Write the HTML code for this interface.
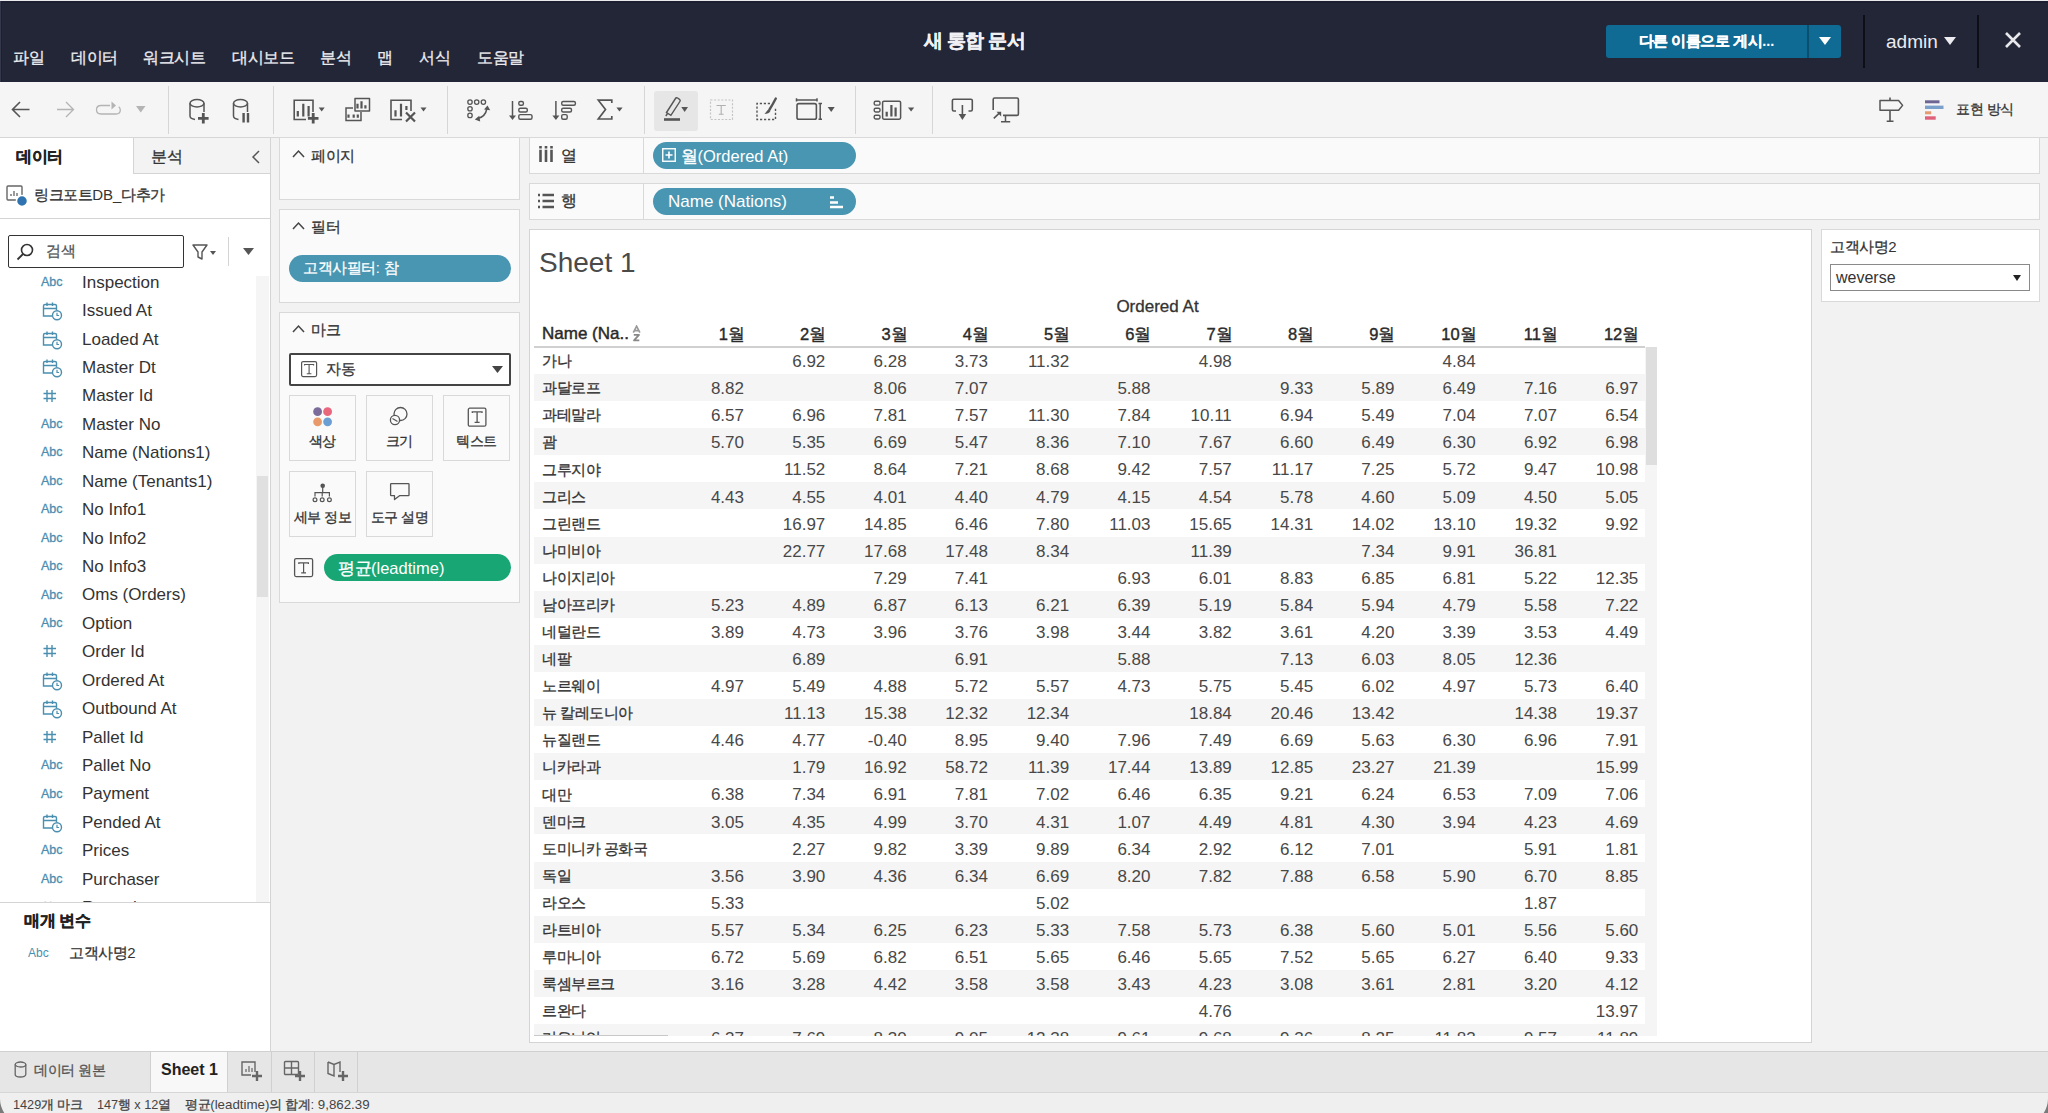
<!DOCTYPE html><html><head><meta charset="utf-8"><style>
html,body{margin:0;padding:0;width:2048px;height:1113px;overflow:hidden;background:#f2f2f2;font-family:"Liberation Sans",sans-serif;}
.b{position:absolute;}
.t{position:absolute;white-space:nowrap;}
.k{letter-spacing:-0.03em;-webkit-text-stroke:0.3px currentColor;}
</style></head><body>
<div class="b" style="left:0px;top:0px;width:2048px;height:82px;background:#232637;box-sizing:border-box;"></div>
<div class="b" style="left:0px;top:0px;width:2048px;height:1px;background:#e9e9ee;box-sizing:border-box;"></div>
<div class="b" style="left:0px;top:1px;width:2048px;height:2px;background:#1d2030;box-sizing:border-box;"></div>
<div class="b" style="left:0px;top:1px;width:1px;height:81px;background:#35384a;box-sizing:border-box;"></div>
<div class="b" style="left:1px;top:1px;width:1px;height:81px;background:#1d2030;box-sizing:border-box;"></div>
<div class="t" style="top:45.5px;font-size:16px;line-height:24px;color:#ececf0;font-weight:normal;left:13px;"><span class="k">파일</span></div>
<div class="t" style="top:45.5px;font-size:16px;line-height:24px;color:#ececf0;font-weight:normal;left:71px;"><span class="k">데이터</span></div>
<div class="t" style="top:45.5px;font-size:16px;line-height:24px;color:#ececf0;font-weight:normal;left:143px;"><span class="k">워크시트</span></div>
<div class="t" style="top:45.5px;font-size:16px;line-height:24px;color:#ececf0;font-weight:normal;left:232px;"><span class="k">대시보드</span></div>
<div class="t" style="top:45.5px;font-size:16px;line-height:24px;color:#ececf0;font-weight:normal;left:320px;"><span class="k">분석</span></div>
<div class="t" style="top:45.5px;font-size:16px;line-height:24px;color:#ececf0;font-weight:normal;left:377px;"><span class="k">맵</span></div>
<div class="t" style="top:45.5px;font-size:16px;line-height:24px;color:#ececf0;font-weight:normal;left:419px;"><span class="k">서식</span></div>
<div class="t" style="top:45.5px;font-size:16px;line-height:24px;color:#ececf0;font-weight:normal;left:477px;"><span class="k">도움말</span></div>
<div class="t" style="top:28.5px;font-size:19px;line-height:24px;color:#f0f0f4;font-weight:bold;left:824.5px;width:300px;text-align:center;"><span class="k">새 통합 문서</span></div>
<div class="b" style="left:1606px;top:25px;width:235px;height:33px;background:#0f6a94;box-sizing:border-box;border-radius:3px;"></div>
<div class="b" style="left:1807px;top:25px;width:2px;height:33px;background:#0a4f70;box-sizing:border-box;"></div>
<div class="t" style="top:29.0px;font-size:14.5px;line-height:24px;color:#ffffff;font-weight:bold;left:1606.5px;width:200px;text-align:center;"><span class="k">다른 이름으로 게시</span>...</div>
<svg class="b" style="left:1819px;top:37px;" width="12" height="8" viewBox="0 0 12 8"><path d="M0 0H12L6 8Z" fill="#fff"/></svg>
<div class="b" style="left:1863px;top:15px;width:2px;height:53px;background:#0d0e16;box-sizing:border-box;"></div>
<div class="b" style="left:1977px;top:15px;width:2px;height:53px;background:#0d0e16;box-sizing:border-box;"></div>
<div class="t" style="top:29.5px;font-size:19px;line-height:24px;color:#ececf0;font-weight:normal;left:1886px;">admin</div>
<svg class="b" style="left:1944px;top:37px;" width="12" height="8" viewBox="0 0 12 8"><path d="M0 0H12L6 8Z" fill="#ececf0"/></svg>
<svg class="b" style="left:2005px;top:32px;" width="16" height="16" viewBox="0 0 16 16"><path d="M1 1L15 15M15 1L1 15" stroke="#e8e8ec" stroke-width="2.6"/></svg>
<div class="b" style="left:0px;top:82px;width:2048px;height:55px;background:#f5f5f5;box-sizing:border-box;"></div>
<div class="b" style="left:0px;top:137px;width:2048px;height:1px;background:#d6d6d6;box-sizing:border-box;"></div>
<div class="b" style="left:168px;top:86px;width:1px;height:48px;background:#d6d6d6;box-sizing:border-box;"></div>
<div class="b" style="left:273px;top:86px;width:1px;height:48px;background:#d6d6d6;box-sizing:border-box;"></div>
<div class="b" style="left:447px;top:86px;width:1px;height:48px;background:#d6d6d6;box-sizing:border-box;"></div>
<div class="b" style="left:644px;top:86px;width:1px;height:48px;background:#d6d6d6;box-sizing:border-box;"></div>
<div class="b" style="left:855px;top:86px;width:1px;height:48px;background:#d6d6d6;box-sizing:border-box;"></div>
<div class="b" style="left:932px;top:86px;width:1px;height:48px;background:#d6d6d6;box-sizing:border-box;"></div>
<div class="b" style="left:654px;top:91px;width:44px;height:40px;background:#e6e6e6;box-sizing:border-box;border-radius:3px;"></div>
<svg class="b" style="left:0;top:82px" width="2048" height="55" viewBox="0 82 2048 55"><path d="M20 102L12.5 109.5L20 117M12.5 109.5H29.5" stroke="#555" stroke-width="1.6" fill="none" /><path d="M66 102L73.5 109.5L66 117M73.5 109.5H57" stroke="#b4b4b4" stroke-width="1.3" fill="none" /><path d="M110 105.5H101C98.3 105.5 96.5 107.3 96.5 109.8C96.5 112.3 98.3 114 101 114H116C118.6 114 120.3 112.3 120.3 110C120.3 108.6 119.8 107.6 118.8 106.8" stroke="#b4b4b4" stroke-width="1.3" fill="none" /><path d="M111.5 101.5L116 105.5L111.5 109.5Z" fill="#b4b4b4"/><path d="M136 106H145.5L140.75 112.5Z" fill="#b4b4b4"/><path d="M204 112V103.3C204 101.2 200.8 99.6 197 99.6C193.2 99.6 190 101.2 190 103.3V116C190 117.8 192 119 195 119.4" stroke="#555" stroke-width="1.5" fill="none" /><path d="M190 103.3C190 105.4 193.2 107 197 107C200.8 107 204 105.4 204 103.3" stroke="#555" stroke-width="1.5" fill="none" /><path d="M203.3 113V123.6M198 118.3H208.6" stroke="#555" stroke-width="2.8" fill="none" /><path d="M247.5 112V103.3C247.5 101.2 244.3 99.6 240.5 99.6C236.7 99.6 233.5 101.2 233.5 103.3V116C233.5 117.8 235.5 119 238.5 119.4" stroke="#555" stroke-width="1.5" fill="none" /><path d="M233.5 103.3C233.5 105.4 236.7 107 240.5 107C244.3 107 247.5 105.4 247.5 103.3" stroke="#555" stroke-width="1.5" fill="none" /><path d="M243.6 113V122.4M248 113V122.4" stroke="#555" stroke-width="2.4" fill="none" /><path d="M306 119.5H294.2V100.2H313V112" stroke="#555" stroke-width="1.6" fill="none" /><path d="M297.8 116.6V111M303.3 116.6V103.7M308.6 116.6V106" stroke="#555" stroke-width="2.2" fill="none" /><path d="M313.2 113V123.6M307.9 118.3H318.5" stroke="#555" stroke-width="2.8" fill="none" /><path d="M318.7 107.6H324.7L321.7 111.6Z" fill="#555"/><path d="M355 98.5H369.5V111H355Z" stroke="#555" stroke-width="1.5" fill="none" stroke-linejoin="round"/><path d="M357.5 108.5V103.7M361.5 108.5V101.3M365.4 108.5V105.2" stroke="#555" stroke-width="2.2" fill="none" /><path d="M353 108H346V120.5H361V112" stroke="#555" stroke-width="1.5" fill="none" /><path d="M348.5 117.7V114.6M353.7 117.7V114.6M357.8 117.7V114.6" stroke="#555" stroke-width="2.2" fill="none" /><path d="M402 119.5H391V100.2H411V111" stroke="#555" stroke-width="1.6" fill="none" /><path d="M395.5 116.6V110.3M401 116.6V103.7M406.4 110V106" stroke="#555" stroke-width="2.2" fill="none" /><path d="M406 112.5L415 121.5M415 112.5L406 121.5" stroke="#555" stroke-width="2.2" fill="none" /><path d="M420.5 107.6H426.5L423.5 111.6Z" fill="#555"/><circle cx="470" cy="102.1" r="2.2" fill="none" stroke="#555" stroke-width="1.3"/><circle cx="476.7" cy="102.1" r="2.2" fill="none" stroke="#555" stroke-width="1.3"/><circle cx="483.4" cy="102.1" r="2.2" fill="none" stroke="#555" stroke-width="1.3"/><circle cx="470" cy="108.75" r="2.2" fill="none" stroke="#555" stroke-width="1.3"/><circle cx="470" cy="115.4" r="2.2" fill="none" stroke="#555" stroke-width="1.3"/><path d="M477.5 118.6C482.5 117.5 486 113.5 486.8 109" stroke="#555" stroke-width="1.5" fill="none" /><path d="M484 109.6L487.5 105.5L490.2 110.3Z" fill="#555"/><path d="M479.3 115.8L474.8 119.4L480.2 121.6Z" fill="#555"/><path d="M512.5 101V118" stroke="#555" stroke-width="1.5" fill="none" /><path d="M509 115.5H516L512.5 120Z" fill="#555"/><rect x="518.8" y="101.5" width="4.600000000000023" height="3.799999999999997" rx="1.5" fill="none" stroke="#555" stroke-width="1.4"/><rect x="518.8" y="108.3" width="8.5" height="3.700000000000003" rx="1.5" fill="none" stroke="#555" stroke-width="1.4"/><rect x="518.8" y="114.6" width="13.200000000000045" height="4.6000000000000085" rx="1.5" fill="none" stroke="#555" stroke-width="1.4"/><path d="M555.9 101V118" stroke="#555" stroke-width="1.5" fill="none" /><path d="M552.4 115.5H559.4L555.9 120Z" fill="#555"/><rect x="561.7" y="101.5" width="13.699999999999932" height="3.799999999999997" rx="1.5" fill="none" stroke="#555" stroke-width="1.4"/><rect x="561.7" y="108.3" width="9.799999999999955" height="3.700000000000003" rx="1.5" fill="none" stroke="#555" stroke-width="1.4"/><rect x="561.7" y="114.6" width="5.5" height="4.6000000000000085" rx="1.5" fill="none" stroke="#555" stroke-width="1.4"/><path d="M611.8 103V100.2H598.3L605.5 109.6L598.3 119H611.8V116" stroke="#555" stroke-width="1.7" fill="none" /><path d="M616.4 107.6H622.6L619.5 111.6Z" fill="#555"/><path d="M666.5 112.5L675.5 98.5C676 97.7 676.9 97.5 677.6 98L679.5 99.3C680.2 99.8 680.4 100.7 679.9 101.5L670.9 115.4Z" stroke="#555" stroke-width="1.4" fill="none" /><path d="M665.8 116L667.5 113.5" stroke="#555" stroke-width="1.4" fill="none" /><path d="M664 119.5H680" stroke="#555" stroke-width="2.6" fill="none" /><path d="M681.3 107H688L684.65 112Z" fill="#555"/><rect x="710.5" y="100" width="22" height="19.5" fill="none" stroke="#c4c4c4" stroke-width="1.2" stroke-dasharray="2 1.6"/><path d="M716.5 105.5H725.8M721.2 105.5V114.3M718.8 114.3H723.6" stroke="#b0b0b0" stroke-width="1.1" fill="none" /><path d="M770 103.5H757V119.5H775.5V108" stroke="#555" stroke-width="1.4" fill="none" stroke-dasharray="2.2 1.8"/><path d="M775.8 98.5C774.5 101 771.5 106.5 769.5 109.5" stroke="#555" stroke-width="2.4" fill="none" stroke-linecap="round"/><path d="M768.5 109.5C767 110 766.5 112 764.5 114C767 114 769.8 113 770.5 110.8Z" fill="#555"/><path d="M796.5 98.3V101.4M817 98.3V101.4M796.5 99.9H817" stroke="#555" stroke-width="1.5" fill="none" /><rect x="797" y="103.6" width="19.4" height="15.6" rx="1.8" fill="none" stroke="#555" stroke-width="1.6"/><path d="M818.5 103.6H822M818.5 119.2H822M820.2 103.6V119.2" stroke="#555" stroke-width="1.5" fill="none" /><path d="M827.7 107H834.7L831.2 112Z" fill="#555"/><rect x="874.2" y="101.3" width="5.8" height="3.799999999999997" rx="1.4" fill="none" stroke="#555" stroke-width="1.4"/><rect x="874.2" y="108.2" width="5.8" height="3.799999999999997" rx="1.4" fill="none" stroke="#555" stroke-width="1.4"/><rect x="874.2" y="115.2" width="5.8" height="3.799999999999997" rx="1.4" fill="none" stroke="#555" stroke-width="1.4"/><rect x="882.6" y="101.2" width="18" height="18" rx="1.4" fill="none" stroke="#555" stroke-width="1.5"/><path d="M886.7 116.6V111.7M891.4 116.6V105M895.6 116.6V107.5" stroke="#555" stroke-width="2.2" fill="none" /><path d="M908 107.5H914.2L911.1 111.6Z" fill="#555"/><path d="M956 111H953.8C953 111 952.4 110.4 952.4 109.6V100.6C952.4 99.8 953 99.2 953.8 99.2H970.9C971.7 99.2 972.3 99.8 972.3 100.6V109.6C972.3 110.4 971.7 111 970.9 111H968.5" stroke="#555" stroke-width="1.6" fill="none" /><path d="M962.4 105V115" stroke="#555" stroke-width="1.6" fill="none" /><path d="M958.6 114H966.2L962.4 120Z" fill="#555"/><path d="M993.2 110V99.4C993.2 98.6 993.8 98 994.6 98H1017C1017.8 98 1018.4 98.6 1018.4 99.4V114C1018.4 114.8 1017.8 115.4 1017 115.4H1003" stroke="#555" stroke-width="1.6" fill="none" /><path d="M1005.5 115.4V121.6M1001 121.8H1010.2" stroke="#555" stroke-width="1.5" fill="none" /><path d="M993.8 118.3L999.8 112.6" stroke="#555" stroke-width="1.6" fill="none" /><path d="M996.5 111.8H1001.2V116.5Z" fill="#555"/><path d="M1890 97.5V100.5M1890 110.3V121M1886.7 121.2H1893.5" stroke="#555" stroke-width="1.6" fill="none" /><path d="M1880 100.5H1898.6L1902.6 105.4L1898.6 110.3H1880Z" stroke="#555" stroke-width="1.5" fill="none" stroke-linejoin="round"/><rect x="1925" y="100.3" width="14.5" height="3" fill="#6e6595"/><rect x="1925" y="105.6" width="18.5" height="3.4" fill="#7ba0cc"/><rect x="1925" y="111.3" width="6.2" height="3" fill="#e59b6e"/><rect x="1925" y="116.3" width="10.7" height="3.4" fill="#e0607a"/></svg>
<div class="t" style="top:97.0px;font-size:14px;line-height:24px;color:#333;font-weight:normal;left:1956px;"><span class="k">표현 방식</span></div>
<div class="b" style="left:0px;top:138px;width:270px;height:913px;background:#ffffff;box-sizing:border-box;"></div>
<div class="b" style="left:270px;top:138px;width:1px;height:913px;background:#d4d4d4;box-sizing:border-box;"></div>
<div class="b" style="left:133px;top:138px;width:137px;height:36px;background:#f3f3f3;box-sizing:border-box;"></div>
<div class="b" style="left:133px;top:138px;width:1px;height:36px;background:#d4d4d4;box-sizing:border-box;"></div>
<div class="b" style="left:133px;top:173px;width:137px;height:1px;background:#d4d4d4;box-sizing:border-box;"></div>
<div class="t" style="top:144.5px;font-size:16px;line-height:24px;color:#222;font-weight:bold;left:16px;"><span class="k">데이터</span></div>
<div class="t" style="top:144.5px;font-size:16px;line-height:24px;color:#333;font-weight:normal;left:151px;"><span class="k">분석</span></div>
<svg class="b" style="left:251px;top:150px;" width="10" height="14" viewBox="0 0 10 14"><path d="M8 1L2 7L8 13" stroke="#555" stroke-width="1.5" fill="none"/></svg>
<svg class="b" style="left:6px;top:185px;" width="22" height="22" viewBox="0 0 22 22"><rect x="1" y="1" width="15" height="14" rx="1" fill="none" stroke="#666" stroke-width="1.4"/><path d="M5 11V9M8 11V6M11 11V8" stroke="#666" stroke-width="1.3"/><circle cx="16" cy="16" r="5.5" fill="#2f74b0" stroke="#fff" stroke-width="1.5"/></svg>
<div class="t" style="top:183.0px;font-size:15px;line-height:24px;color:#333;font-weight:normal;left:34px;"><span class="k">링크포트</span>DB_<span class="k">다추가</span></div>
<div class="b" style="left:0px;top:218px;width:270px;height:1px;background:#d4d4d4;box-sizing:border-box;"></div>
<div class="b" style="left:8px;top:235px;width:176px;height:33px;background:#fff;box-sizing:border-box;border:1.6px solid #333;border-radius:2px;"></div>
<svg class="b" style="left:16px;top:243px;" width="18" height="18" viewBox="0 0 18 18"><circle cx="11" cy="7" r="5.5" fill="none" stroke="#333" stroke-width="1.6"/><path d="M7 11L1.5 16.5" stroke="#333" stroke-width="1.8"/></svg>
<div class="t" style="top:239.0px;font-size:15px;line-height:24px;color:#555;font-weight:normal;left:46px;"><span class="k">검색</span></div>
<svg class="b" style="left:192px;top:244px;" width="26" height="16" viewBox="0 0 26 16"><path d="M1 1H15L10 8V15L6 13V8Z" fill="none" stroke="#555" stroke-width="1.4" stroke-linejoin="round"/><path d="M18 7H24L21 11Z" fill="#555"/></svg>
<div class="b" style="left:228px;top:237px;width:1px;height:29px;background:#d4d4d4;box-sizing:border-box;"></div>
<svg class="b" style="left:243px;top:248px;" width="11" height="7" viewBox="0 0 11 7"><path d="M0 0H11L5.5 7Z" fill="#555"/></svg>
<div class="b" style="left:256px;top:276px;width:13px;height:627px;background:#f5f5f5;box-sizing:border-box;"></div>
<div class="b" style="left:257px;top:476px;width:11px;height:121px;background:#e0e0e0;box-sizing:border-box;"></div>
<div class="b" style="left:0;top:270px;width:256px;height:633px;overflow:hidden;">
<div class="t" style="left:41px;top:3.8px;font-size:12.5px;line-height:16px;color:#4a8db0;-webkit-text-stroke:0.3px #4a8db0;">Abc</div>
<div class="t" style="left:82px;top:0.6px;font-size:17px;line-height:24px;color:#333;">Inspection</div>
<svg class="b" style="left:41px;top:31.2px" width="22" height="20"><path d="M11 15H2.5V5C2.5 4 3 3.5 4 3.5H14C15 3.5 15.5 4 15.5 5V9M2.5 7.5H15.5M6 1.5V5M11.5 1.5V5" stroke="#4a8fb0" stroke-width="1.4" fill="none"/><circle cx="16" cy="14.2" r="4.5" fill="#fff" stroke="#4a8fb0" stroke-width="1.4"/><path d="M16 11.8V14.5H18" stroke="#4a8fb0" stroke-width="1.2" fill="none"/></svg>
<div class="t" style="left:82px;top:29.0px;font-size:17px;line-height:24px;color:#333;">Issued At</div>
<svg class="b" style="left:41px;top:59.7px" width="22" height="20"><path d="M11 15H2.5V5C2.5 4 3 3.5 4 3.5H14C15 3.5 15.5 4 15.5 5V9M2.5 7.5H15.5M6 1.5V5M11.5 1.5V5" stroke="#4a8fb0" stroke-width="1.4" fill="none"/><circle cx="16" cy="14.2" r="4.5" fill="#fff" stroke="#4a8fb0" stroke-width="1.4"/><path d="M16 11.8V14.5H18" stroke="#4a8fb0" stroke-width="1.2" fill="none"/></svg>
<div class="t" style="left:82px;top:57.5px;font-size:17px;line-height:24px;color:#333;">Loaded At</div>
<svg class="b" style="left:41px;top:88.1px" width="22" height="20"><path d="M11 15H2.5V5C2.5 4 3 3.5 4 3.5H14C15 3.5 15.5 4 15.5 5V9M2.5 7.5H15.5M6 1.5V5M11.5 1.5V5" stroke="#4a8fb0" stroke-width="1.4" fill="none"/><circle cx="16" cy="14.2" r="4.5" fill="#fff" stroke="#4a8fb0" stroke-width="1.4"/><path d="M16 11.8V14.5H18" stroke="#4a8fb0" stroke-width="1.2" fill="none"/></svg>
<div class="t" style="left:82px;top:85.9px;font-size:17px;line-height:24px;color:#333;">Master Dt</div>
<svg class="b" style="left:42px;top:117.5px" width="16" height="16"><path d="M5 2V14M10 2V14M1.5 5.5H14M1.5 10.5H14" stroke="#4a8fb0" stroke-width="1.4"/></svg>
<div class="t" style="left:82px;top:114.3px;font-size:17px;line-height:24px;color:#333;">Master Id</div>
<div class="t" style="left:41px;top:146.0px;font-size:12.5px;line-height:16px;color:#4a8db0;-webkit-text-stroke:0.3px #4a8db0;">Abc</div>
<div class="t" style="left:82px;top:142.8px;font-size:17px;line-height:24px;color:#333;">Master No</div>
<div class="t" style="left:41px;top:174.4px;font-size:12.5px;line-height:16px;color:#4a8db0;-webkit-text-stroke:0.3px #4a8db0;">Abc</div>
<div class="t" style="left:82px;top:171.2px;font-size:17px;line-height:24px;color:#333;">Name (Nations1)</div>
<div class="t" style="left:41px;top:202.8px;font-size:12.5px;line-height:16px;color:#4a8db0;-webkit-text-stroke:0.3px #4a8db0;">Abc</div>
<div class="t" style="left:82px;top:199.6px;font-size:17px;line-height:24px;color:#333;">Name (Tenants1)</div>
<div class="t" style="left:41px;top:231.2px;font-size:12.5px;line-height:16px;color:#4a8db0;-webkit-text-stroke:0.3px #4a8db0;">Abc</div>
<div class="t" style="left:82px;top:228.0px;font-size:17px;line-height:24px;color:#333;">No Info1</div>
<div class="t" style="left:41px;top:259.7px;font-size:12.5px;line-height:16px;color:#4a8db0;-webkit-text-stroke:0.3px #4a8db0;">Abc</div>
<div class="t" style="left:82px;top:256.5px;font-size:17px;line-height:24px;color:#333;">No Info2</div>
<div class="t" style="left:41px;top:288.1px;font-size:12.5px;line-height:16px;color:#4a8db0;-webkit-text-stroke:0.3px #4a8db0;">Abc</div>
<div class="t" style="left:82px;top:284.9px;font-size:17px;line-height:24px;color:#333;">No Info3</div>
<div class="t" style="left:41px;top:316.5px;font-size:12.5px;line-height:16px;color:#4a8db0;-webkit-text-stroke:0.3px #4a8db0;">Abc</div>
<div class="t" style="left:82px;top:313.3px;font-size:17px;line-height:24px;color:#333;">Oms (Orders)</div>
<div class="t" style="left:41px;top:345.0px;font-size:12.5px;line-height:16px;color:#4a8db0;-webkit-text-stroke:0.3px #4a8db0;">Abc</div>
<div class="t" style="left:82px;top:341.8px;font-size:17px;line-height:24px;color:#333;">Option</div>
<svg class="b" style="left:42px;top:373.4px" width="16" height="16"><path d="M5 2V14M10 2V14M1.5 5.5H14M1.5 10.5H14" stroke="#4a8fb0" stroke-width="1.4"/></svg>
<div class="t" style="left:82px;top:370.2px;font-size:17px;line-height:24px;color:#333;">Order Id</div>
<svg class="b" style="left:41px;top:400.8px" width="22" height="20"><path d="M11 15H2.5V5C2.5 4 3 3.5 4 3.5H14C15 3.5 15.5 4 15.5 5V9M2.5 7.5H15.5M6 1.5V5M11.5 1.5V5" stroke="#4a8fb0" stroke-width="1.4" fill="none"/><circle cx="16" cy="14.2" r="4.5" fill="#fff" stroke="#4a8fb0" stroke-width="1.4"/><path d="M16 11.8V14.5H18" stroke="#4a8fb0" stroke-width="1.2" fill="none"/></svg>
<div class="t" style="left:82px;top:398.6px;font-size:17px;line-height:24px;color:#333;">Ordered At</div>
<svg class="b" style="left:41px;top:429.2px" width="22" height="20"><path d="M11 15H2.5V5C2.5 4 3 3.5 4 3.5H14C15 3.5 15.5 4 15.5 5V9M2.5 7.5H15.5M6 1.5V5M11.5 1.5V5" stroke="#4a8fb0" stroke-width="1.4" fill="none"/><circle cx="16" cy="14.2" r="4.5" fill="#fff" stroke="#4a8fb0" stroke-width="1.4"/><path d="M16 11.8V14.5H18" stroke="#4a8fb0" stroke-width="1.2" fill="none"/></svg>
<div class="t" style="left:82px;top:427.1px;font-size:17px;line-height:24px;color:#333;">Outbound At</div>
<svg class="b" style="left:42px;top:458.7px" width="16" height="16"><path d="M5 2V14M10 2V14M1.5 5.5H14M1.5 10.5H14" stroke="#4a8fb0" stroke-width="1.4"/></svg>
<div class="t" style="left:82px;top:455.5px;font-size:17px;line-height:24px;color:#333;">Pallet Id</div>
<div class="t" style="left:41px;top:487.1px;font-size:12.5px;line-height:16px;color:#4a8db0;-webkit-text-stroke:0.3px #4a8db0;">Abc</div>
<div class="t" style="left:82px;top:483.9px;font-size:17px;line-height:24px;color:#333;">Pallet No</div>
<div class="t" style="left:41px;top:515.5px;font-size:12.5px;line-height:16px;color:#4a8db0;-webkit-text-stroke:0.3px #4a8db0;">Abc</div>
<div class="t" style="left:82px;top:512.3px;font-size:17px;line-height:24px;color:#333;">Payment</div>
<svg class="b" style="left:41px;top:543.0px" width="22" height="20"><path d="M11 15H2.5V5C2.5 4 3 3.5 4 3.5H14C15 3.5 15.5 4 15.5 5V9M2.5 7.5H15.5M6 1.5V5M11.5 1.5V5" stroke="#4a8fb0" stroke-width="1.4" fill="none"/><circle cx="16" cy="14.2" r="4.5" fill="#fff" stroke="#4a8fb0" stroke-width="1.4"/><path d="M16 11.8V14.5H18" stroke="#4a8fb0" stroke-width="1.2" fill="none"/></svg>
<div class="t" style="left:82px;top:540.8px;font-size:17px;line-height:24px;color:#333;">Pended At</div>
<div class="t" style="left:41px;top:572.4px;font-size:12.5px;line-height:16px;color:#4a8db0;-webkit-text-stroke:0.3px #4a8db0;">Abc</div>
<div class="t" style="left:82px;top:569.2px;font-size:17px;line-height:24px;color:#333;">Prices</div>
<div class="t" style="left:41px;top:600.8px;font-size:12.5px;line-height:16px;color:#4a8db0;-webkit-text-stroke:0.3px #4a8db0;">Abc</div>
<div class="t" style="left:82px;top:597.6px;font-size:17px;line-height:24px;color:#333;">Purchaser</div>
<div class="t" style="left:41px;top:629.3px;font-size:12.5px;line-height:16px;color:#4a8db0;-webkit-text-stroke:0.3px #4a8db0;">Abc</div>
<div class="t" style="left:82px;top:626.1px;font-size:17px;line-height:24px;color:#333;">Remarks</div>
</div>
<div class="b" style="left:0px;top:902px;width:270px;height:1px;background:#d4d4d4;box-sizing:border-box;"></div>
<div class="t" style="top:909.0px;font-size:16px;line-height:24px;color:#222;font-weight:bold;left:24px;"><span class="k">매개 변수</span></div>
<div class="t" style="top:945.0px;font-size:12px;line-height:16px;color:#4a8fb0;font-weight:normal;left:28px;">Abc</div>
<div class="t" style="top:941.0px;font-size:15px;line-height:24px;color:#333;font-weight:normal;left:69px;"><span class="k">고객사명</span>2</div>
<div class="b" style="left:279px;top:137px;width:241px;height:63px;background:#fafafa;box-sizing:border-box;border:1px solid #d9d9d9;"></div>
<svg class="b" style="left:292px;top:149px;" width="13" height="9" viewBox="0 0 13 9"><path d="M1 8L6.5 2L12 8" stroke="#444" stroke-width="1.5" fill="none"/></svg>
<div class="t" style="top:143.5px;font-size:15px;line-height:24px;color:#333;font-weight:normal;left:311px;"><span class="k">페이지</span></div>
<div class="b" style="left:279px;top:209px;width:241px;height:94px;background:#fafafa;box-sizing:border-box;border:1px solid #d9d9d9;"></div>
<svg class="b" style="left:292px;top:221px;" width="13" height="9" viewBox="0 0 13 9"><path d="M1 8L6.5 2L12 8" stroke="#444" stroke-width="1.5" fill="none"/></svg>
<div class="t" style="top:215.0px;font-size:15px;line-height:24px;color:#333;font-weight:normal;left:311px;"><span class="k">필터</span></div>
<div class="b" style="left:289px;top:254.5px;width:222px;height:27.5px;background:#4996b2;box-sizing:border-box;border-radius:14px;"></div>
<div class="t" style="top:256.0px;font-size:14.5px;line-height:24px;color:#fff;font-weight:normal;left:303px;"><span class="k">고객사필터</span>: <span class="k">참</span></div>
<div class="b" style="left:279px;top:312px;width:241px;height:291px;background:#fafafa;box-sizing:border-box;border:1px solid #d9d9d9;"></div>
<svg class="b" style="left:292px;top:324px;" width="13" height="9" viewBox="0 0 13 9"><path d="M1 8L6.5 2L12 8" stroke="#444" stroke-width="1.5" fill="none"/></svg>
<div class="t" style="top:318.0px;font-size:15px;line-height:24px;color:#333;font-weight:normal;left:311px;"><span class="k">마크</span></div>
<div class="b" style="left:288.5px;top:353px;width:222.5px;height:33px;background:#fff;box-sizing:border-box;border:2px solid #444;border-radius:2px;"></div>
<svg class="b" style="left:300px;top:360px;" width="18" height="18" viewBox="0 0 18 18"><rect x="1.6" y="1.6" width="15" height="15" rx="1.5" fill="none" stroke="#555" stroke-width="1.2"/><path d="M4.6 5.6V4.5H13.6V5.6M9.1 4.5V13.8M6.8 13.8H11.4" stroke="#555" stroke-width="1.1" fill="none"/></svg>
<div class="t" style="top:357.0px;font-size:15px;line-height:24px;color:#333;font-weight:normal;left:326px;"><span class="k">자동</span></div>
<svg class="b" style="left:492px;top:366px;" width="11" height="7" viewBox="0 0 11 7"><path d="M0 0H11L5.5 7Z" fill="#444"/></svg>
<div class="b" style="left:289px;top:394.5px;width:67px;height:66.0px;background:#fafafa;box-sizing:border-box;border:1px solid #d9d9d9;"></div>
<div class="t" style="top:430.0px;font-size:13.5px;line-height:24px;color:#333;font-weight:normal;left:282.5px;width:80px;text-align:center;"><span class="k">색상</span></div>
<div class="b" style="left:366px;top:394.5px;width:67px;height:66.0px;background:#fafafa;box-sizing:border-box;border:1px solid #d9d9d9;"></div>
<div class="t" style="top:430.0px;font-size:13.5px;line-height:24px;color:#333;font-weight:normal;left:359.5px;width:80px;text-align:center;"><span class="k">크기</span></div>
<div class="b" style="left:443px;top:394.5px;width:67px;height:66.0px;background:#fafafa;box-sizing:border-box;border:1px solid #d9d9d9;"></div>
<div class="t" style="top:430.0px;font-size:13.5px;line-height:24px;color:#333;font-weight:normal;left:436.5px;width:80px;text-align:center;"><span class="k">텍스트</span></div>
<div class="b" style="left:289px;top:470.5px;width:67px;height:66.0px;background:#fafafa;box-sizing:border-box;border:1px solid #d9d9d9;"></div>
<div class="t" style="top:506.0px;font-size:13.5px;line-height:24px;color:#333;font-weight:normal;left:282.5px;width:80px;text-align:center;"><span class="k">세부 정보</span></div>
<div class="b" style="left:366px;top:470.5px;width:67px;height:66.0px;background:#fafafa;box-sizing:border-box;border:1px solid #d9d9d9;"></div>
<div class="t" style="top:506.0px;font-size:13.5px;line-height:24px;color:#333;font-weight:normal;left:359.5px;width:80px;text-align:center;"><span class="k">도구 설명</span></div>
<svg class="b" style="left:312px;top:406px;" width="22" height="22" viewBox="0 0 22 22"><circle cx="5.6" cy="5.7" r="4.4" fill="#7b6b9a"/><circle cx="15.6" cy="5.7" r="4.4" fill="#e8677c"/><circle cx="5.6" cy="15.8" r="4.4" fill="#e89a6b"/><circle cx="15.6" cy="15.8" r="4.4" fill="#6b9fd4"/></svg>
<svg class="b" style="left:389px;top:406px;" width="20" height="20" viewBox="0 0 20 20"><circle cx="11.5" cy="8" r="6.5" fill="none" stroke="#555" stroke-width="1.3"/><circle cx="6" cy="14" r="4.6" fill="#fafafa" stroke="#555" stroke-width="1.3"/><path d="M3.5 12.5L8.5 15.5" stroke="#555" stroke-width="1.3"/></svg>
<svg class="b" style="left:466px;top:406px;" width="21" height="21" viewBox="0 0 21 21"><rect x="2.3" y="2.2" width="17.6" height="18" rx="1.5" fill="none" stroke="#555" stroke-width="1.3"/><path d="M6.3 7V5.9H16V7M11.1 5.9V16.3M8.6 16.3H13.6" stroke="#555" stroke-width="1.3" fill="none"/></svg>
<svg class="b" style="left:310px;top:481px;" width="25" height="22" viewBox="0 0 25 22"><circle cx="12.7" cy="4.8" r="2.3" fill="#555"/><path d="M12.7 6V11.6M5 15.5V11.6H19.4V15.5M12.2 11.6V15.5" stroke="#555" stroke-width="1.2" fill="none"/><circle cx="5" cy="18.8" r="1.9" fill="none" stroke="#555" stroke-width="1.2"/><circle cx="12.2" cy="18.8" r="1.9" fill="none" stroke="#555" stroke-width="1.2"/><circle cx="19.4" cy="18.8" r="1.9" fill="none" stroke="#555" stroke-width="1.2"/></svg>
<svg class="b" style="left:388px;top:481px;" width="24" height="22" viewBox="0 0 24 22"><path d="M2.6 3.2C2.6 2.9 2.9 2.6 3.2 2.6H20.4C20.7 2.6 21 2.9 21 3.2V14.1C21 14.4 20.7 14.7 20.4 14.7H11.5L6.5 18.6V14.7H3.2C2.9 14.7 2.6 14.4 2.6 14.1Z" fill="none" stroke="#555" stroke-width="1.3" stroke-linejoin="round"/></svg>
<svg class="b" style="left:293px;top:557px;" width="21" height="21" viewBox="0 0 21 21"><rect x="1.6" y="1.6" width="18" height="18" rx="1.5" fill="none" stroke="#555" stroke-width="1.3"/><path d="M5.8 7V5.8H15.4V7M10.6 5.8V15.8M8.2 15.8H13" stroke="#555" stroke-width="1.2" fill="none"/></svg>
<div class="b" style="left:324px;top:554px;width:187px;height:27px;background:#19a675;box-sizing:border-box;border-radius:14px;"></div>
<div class="t" style="top:556.0px;font-size:16.5px;line-height:24px;color:#fff;font-weight:normal;left:338px;"><span class="k">평균</span>(leadtime)</div>
<div class="b" style="left:529px;top:137px;width:1511px;height:37px;background:#fafafa;box-sizing:border-box;border:1px solid #d9d9d9;"></div>
<div class="b" style="left:643px;top:137px;width:1px;height:37px;background:#d9d9d9;box-sizing:border-box;"></div>
<div class="b" style="left:529px;top:183px;width:1511px;height:37px;background:#fafafa;box-sizing:border-box;border:1px solid #d9d9d9;"></div>
<div class="b" style="left:643px;top:183px;width:1px;height:37px;background:#d9d9d9;box-sizing:border-box;"></div>
<svg class="b" style="left:538px;top:145px;" width="16" height="18" viewBox="0 0 16 18"><path d="M2.5 4.7V17M8 4.7V17M13.5 4.7V17" stroke="#555" stroke-width="2.6"/><path d="M2.5 1V3.6M8 1V3.6M13.5 1V3.6" stroke="#555" stroke-width="2.6"/></svg>
<div class="t" style="top:144.0px;font-size:16px;line-height:24px;color:#333;font-weight:normal;left:561px;"><span class="k">열</span></div>
<svg class="b" style="left:537px;top:192.5px;" width="18" height="16" viewBox="0 0 18 16"><path d="M1 2H3M1 8H3M1 14H3" stroke="#555" stroke-width="2.4"/><path d="M5.5 2H17M5.5 8H17M5.5 14H17" stroke="#555" stroke-width="2.4"/></svg>
<div class="t" style="top:189.0px;font-size:16px;line-height:24px;color:#333;font-weight:normal;left:561px;"><span class="k">행</span></div>
<div class="b" style="left:653px;top:142px;width:203px;height:27px;background:#4996b2;box-sizing:border-box;border-radius:14px;"></div>
<svg class="b" style="left:662px;top:148px;" width="14" height="14" viewBox="0 0 14 14"><rect x="0.75" y="0.75" width="12.5" height="12.5" fill="none" stroke="#fff" stroke-width="1.4"/><path d="M7 3.5V10.5M3.5 7H10.5" stroke="#fff" stroke-width="1.6"/></svg>
<div class="t" style="top:143.5px;font-size:16.5px;line-height:24px;color:#fff;font-weight:normal;left:681px;"><span class="k">월</span>(Ordered At)</div>
<div class="b" style="left:653px;top:188px;width:203px;height:27px;background:#4996b2;box-sizing:border-box;border-radius:14px;"></div>
<div class="t" style="top:189.5px;font-size:17px;line-height:24px;color:#fff;font-weight:normal;left:668px;">Name (Nations)</div>
<svg class="b" style="left:829px;top:195px;" width="15" height="14" viewBox="0 0 15 14"><path d="M1 2.5H5M1 7.5H9M1 12H14" stroke="#fff" stroke-width="2.6"/></svg>
<div class="b" style="left:529px;top:229px;width:1283px;height:814px;background:#ffffff;box-sizing:border-box;border:1px solid #d4d4d4;"></div>
<div class="t" style="top:245.5px;font-size:28px;line-height:34px;color:#4a4a4a;font-weight:normal;left:539px;">Sheet 1</div>
<div class="t" style="top:295.0px;font-size:17px;line-height:24px;color:#333;font-weight:normal;left:1057.5px;width:200px;text-align:center;-webkit-text-stroke:0.3px #333;">Ordered At</div>
<div class="t" style="top:322.0px;font-size:17px;line-height:24px;color:#2a2a2a;font-weight:normal;left:542px;-webkit-text-stroke:0.45px #2a2a2a;">Name (Na..</div>
<svg class="b" style="left:632px;top:325px;" width="9" height="18" viewBox="0 0 9 18"><path d="M1.3 7.6L4.6 1.2L7.9 7.6M2.6 5.6H6.6" stroke="#9a9a9a" stroke-width="1.7" fill="none"/><path d="M1.8 9.9H7L2 15.4H7.3" stroke="#888" stroke-width="1.8" fill="none" stroke-linejoin="round"/></svg>
<div class="t" style="top:321.5px;font-size:16.5px;line-height:24px;color:#2a2a2a;font-weight:normal;right:1303.5px;-webkit-text-stroke:0.4px #2a2a2a;">1<span class="k">월</span></div>
<div class="t" style="top:321.5px;font-size:16.5px;line-height:24px;color:#2a2a2a;font-weight:normal;right:1222.2px;-webkit-text-stroke:0.4px #2a2a2a;">2<span class="k">월</span></div>
<div class="t" style="top:321.5px;font-size:16.5px;line-height:24px;color:#2a2a2a;font-weight:normal;right:1140.9px;-webkit-text-stroke:0.4px #2a2a2a;">3<span class="k">월</span></div>
<div class="t" style="top:321.5px;font-size:16.5px;line-height:24px;color:#2a2a2a;font-weight:normal;right:1059.6px;-webkit-text-stroke:0.4px #2a2a2a;">4<span class="k">월</span></div>
<div class="t" style="top:321.5px;font-size:16.5px;line-height:24px;color:#2a2a2a;font-weight:normal;right:978.3px;-webkit-text-stroke:0.4px #2a2a2a;">5<span class="k">월</span></div>
<div class="t" style="top:321.5px;font-size:16.5px;line-height:24px;color:#2a2a2a;font-weight:normal;right:897.0px;-webkit-text-stroke:0.4px #2a2a2a;">6<span class="k">월</span></div>
<div class="t" style="top:321.5px;font-size:16.5px;line-height:24px;color:#2a2a2a;font-weight:normal;right:815.7px;-webkit-text-stroke:0.4px #2a2a2a;">7<span class="k">월</span></div>
<div class="t" style="top:321.5px;font-size:16.5px;line-height:24px;color:#2a2a2a;font-weight:normal;right:734.4000000000001px;-webkit-text-stroke:0.4px #2a2a2a;">8<span class="k">월</span></div>
<div class="t" style="top:321.5px;font-size:16.5px;line-height:24px;color:#2a2a2a;font-weight:normal;right:653.0999999999999px;-webkit-text-stroke:0.4px #2a2a2a;">9<span class="k">월</span></div>
<div class="t" style="top:321.5px;font-size:16.5px;line-height:24px;color:#2a2a2a;font-weight:normal;right:571.8000000000002px;-webkit-text-stroke:0.4px #2a2a2a;">10<span class="k">월</span></div>
<div class="t" style="top:321.5px;font-size:16.5px;line-height:24px;color:#2a2a2a;font-weight:normal;right:490.5px;-webkit-text-stroke:0.4px #2a2a2a;">11<span class="k">월</span></div>
<div class="t" style="top:321.5px;font-size:16.5px;line-height:24px;color:#2a2a2a;font-weight:normal;right:409.20000000000005px;-webkit-text-stroke:0.4px #2a2a2a;">12<span class="k">월</span></div>
<div class="b" style="left:534px;top:346px;width:1111px;height:2px;background:#d0d0d0;box-sizing:border-box;"></div>
<div class="b" style="left:534px;top:347px;width:1111px;height:689px;overflow:hidden;">
<div class="t" style="left:8px;top:2.2px;font-size:15px;line-height:24px;color:#333;"><span class="k">가나</span></div>
<div class="t" style="right:819.7px;top:3.1px;font-size:17px;line-height:24px;color:#484848;">6.92</div>
<div class="t" style="right:738.4px;top:3.1px;font-size:17px;line-height:24px;color:#484848;">6.28</div>
<div class="t" style="right:657.1px;top:3.1px;font-size:17px;line-height:24px;color:#484848;">3.73</div>
<div class="t" style="right:575.8px;top:3.1px;font-size:17px;line-height:24px;color:#484848;">11.32</div>
<div class="t" style="right:413.2px;top:3.1px;font-size:17px;line-height:24px;color:#484848;">4.98</div>
<div class="t" style="right:169.3px;top:3.1px;font-size:17px;line-height:24px;color:#484848;">4.84</div>
<div class="b" style="left:0;top:27.1px;width:1111px;height:27.1px;background:#f5f5f5;"></div>
<div class="t" style="left:8px;top:29.3px;font-size:15px;line-height:24px;color:#333;"><span class="k">과달로프</span></div>
<div class="t" style="right:901.0px;top:30.2px;font-size:17px;line-height:24px;color:#484848;">8.82</div>
<div class="t" style="right:738.4px;top:30.2px;font-size:17px;line-height:24px;color:#484848;">8.06</div>
<div class="t" style="right:657.1px;top:30.2px;font-size:17px;line-height:24px;color:#484848;">7.07</div>
<div class="t" style="right:494.5px;top:30.2px;font-size:17px;line-height:24px;color:#484848;">5.88</div>
<div class="t" style="right:331.9px;top:30.2px;font-size:17px;line-height:24px;color:#484848;">9.33</div>
<div class="t" style="right:250.6px;top:30.2px;font-size:17px;line-height:24px;color:#484848;">5.89</div>
<div class="t" style="right:169.3px;top:30.2px;font-size:17px;line-height:24px;color:#484848;">6.49</div>
<div class="t" style="right:88.0px;top:30.2px;font-size:17px;line-height:24px;color:#484848;">7.16</div>
<div class="t" style="right:6.7px;top:30.2px;font-size:17px;line-height:24px;color:#484848;">6.97</div>
<div class="t" style="left:8px;top:56.4px;font-size:15px;line-height:24px;color:#333;"><span class="k">과테말라</span></div>
<div class="t" style="right:901.0px;top:57.3px;font-size:17px;line-height:24px;color:#484848;">6.57</div>
<div class="t" style="right:819.7px;top:57.3px;font-size:17px;line-height:24px;color:#484848;">6.96</div>
<div class="t" style="right:738.4px;top:57.3px;font-size:17px;line-height:24px;color:#484848;">7.81</div>
<div class="t" style="right:657.1px;top:57.3px;font-size:17px;line-height:24px;color:#484848;">7.57</div>
<div class="t" style="right:575.8px;top:57.3px;font-size:17px;line-height:24px;color:#484848;">11.30</div>
<div class="t" style="right:494.5px;top:57.3px;font-size:17px;line-height:24px;color:#484848;">7.84</div>
<div class="t" style="right:413.2px;top:57.3px;font-size:17px;line-height:24px;color:#484848;">10.11</div>
<div class="t" style="right:331.9px;top:57.3px;font-size:17px;line-height:24px;color:#484848;">6.94</div>
<div class="t" style="right:250.6px;top:57.3px;font-size:17px;line-height:24px;color:#484848;">5.49</div>
<div class="t" style="right:169.3px;top:57.3px;font-size:17px;line-height:24px;color:#484848;">7.04</div>
<div class="t" style="right:88.0px;top:57.3px;font-size:17px;line-height:24px;color:#484848;">7.07</div>
<div class="t" style="right:6.7px;top:57.3px;font-size:17px;line-height:24px;color:#484848;">6.54</div>
<div class="b" style="left:0;top:81.2px;width:1111px;height:27.1px;background:#f5f5f5;"></div>
<div class="t" style="left:8px;top:83.4px;font-size:15px;line-height:24px;color:#333;"><span class="k">괌</span></div>
<div class="t" style="right:901.0px;top:84.3px;font-size:17px;line-height:24px;color:#484848;">5.70</div>
<div class="t" style="right:819.7px;top:84.3px;font-size:17px;line-height:24px;color:#484848;">5.35</div>
<div class="t" style="right:738.4px;top:84.3px;font-size:17px;line-height:24px;color:#484848;">6.69</div>
<div class="t" style="right:657.1px;top:84.3px;font-size:17px;line-height:24px;color:#484848;">5.47</div>
<div class="t" style="right:575.8px;top:84.3px;font-size:17px;line-height:24px;color:#484848;">8.36</div>
<div class="t" style="right:494.5px;top:84.3px;font-size:17px;line-height:24px;color:#484848;">7.10</div>
<div class="t" style="right:413.2px;top:84.3px;font-size:17px;line-height:24px;color:#484848;">7.67</div>
<div class="t" style="right:331.9px;top:84.3px;font-size:17px;line-height:24px;color:#484848;">6.60</div>
<div class="t" style="right:250.6px;top:84.3px;font-size:17px;line-height:24px;color:#484848;">6.49</div>
<div class="t" style="right:169.3px;top:84.3px;font-size:17px;line-height:24px;color:#484848;">6.30</div>
<div class="t" style="right:88.0px;top:84.3px;font-size:17px;line-height:24px;color:#484848;">6.92</div>
<div class="t" style="right:6.7px;top:84.3px;font-size:17px;line-height:24px;color:#484848;">6.98</div>
<div class="t" style="left:8px;top:110.5px;font-size:15px;line-height:24px;color:#333;"><span class="k">그루지야</span></div>
<div class="t" style="right:819.7px;top:111.4px;font-size:17px;line-height:24px;color:#484848;">11.52</div>
<div class="t" style="right:738.4px;top:111.4px;font-size:17px;line-height:24px;color:#484848;">8.64</div>
<div class="t" style="right:657.1px;top:111.4px;font-size:17px;line-height:24px;color:#484848;">7.21</div>
<div class="t" style="right:575.8px;top:111.4px;font-size:17px;line-height:24px;color:#484848;">8.68</div>
<div class="t" style="right:494.5px;top:111.4px;font-size:17px;line-height:24px;color:#484848;">9.42</div>
<div class="t" style="right:413.2px;top:111.4px;font-size:17px;line-height:24px;color:#484848;">7.57</div>
<div class="t" style="right:331.9px;top:111.4px;font-size:17px;line-height:24px;color:#484848;">11.17</div>
<div class="t" style="right:250.6px;top:111.4px;font-size:17px;line-height:24px;color:#484848;">7.25</div>
<div class="t" style="right:169.3px;top:111.4px;font-size:17px;line-height:24px;color:#484848;">5.72</div>
<div class="t" style="right:88.0px;top:111.4px;font-size:17px;line-height:24px;color:#484848;">9.47</div>
<div class="t" style="right:6.7px;top:111.4px;font-size:17px;line-height:24px;color:#484848;">10.98</div>
<div class="b" style="left:0;top:135.4px;width:1111px;height:27.1px;background:#f5f5f5;"></div>
<div class="t" style="left:8px;top:137.6px;font-size:15px;line-height:24px;color:#333;"><span class="k">그리스</span></div>
<div class="t" style="right:901.0px;top:138.5px;font-size:17px;line-height:24px;color:#484848;">4.43</div>
<div class="t" style="right:819.7px;top:138.5px;font-size:17px;line-height:24px;color:#484848;">4.55</div>
<div class="t" style="right:738.4px;top:138.5px;font-size:17px;line-height:24px;color:#484848;">4.01</div>
<div class="t" style="right:657.1px;top:138.5px;font-size:17px;line-height:24px;color:#484848;">4.40</div>
<div class="t" style="right:575.8px;top:138.5px;font-size:17px;line-height:24px;color:#484848;">4.79</div>
<div class="t" style="right:494.5px;top:138.5px;font-size:17px;line-height:24px;color:#484848;">4.15</div>
<div class="t" style="right:413.2px;top:138.5px;font-size:17px;line-height:24px;color:#484848;">4.54</div>
<div class="t" style="right:331.9px;top:138.5px;font-size:17px;line-height:24px;color:#484848;">5.78</div>
<div class="t" style="right:250.6px;top:138.5px;font-size:17px;line-height:24px;color:#484848;">4.60</div>
<div class="t" style="right:169.3px;top:138.5px;font-size:17px;line-height:24px;color:#484848;">5.09</div>
<div class="t" style="right:88.0px;top:138.5px;font-size:17px;line-height:24px;color:#484848;">4.50</div>
<div class="t" style="right:6.7px;top:138.5px;font-size:17px;line-height:24px;color:#484848;">5.05</div>
<div class="t" style="left:8px;top:164.7px;font-size:15px;line-height:24px;color:#333;"><span class="k">그린랜드</span></div>
<div class="t" style="right:819.7px;top:165.6px;font-size:17px;line-height:24px;color:#484848;">16.97</div>
<div class="t" style="right:738.4px;top:165.6px;font-size:17px;line-height:24px;color:#484848;">14.85</div>
<div class="t" style="right:657.1px;top:165.6px;font-size:17px;line-height:24px;color:#484848;">6.46</div>
<div class="t" style="right:575.8px;top:165.6px;font-size:17px;line-height:24px;color:#484848;">7.80</div>
<div class="t" style="right:494.5px;top:165.6px;font-size:17px;line-height:24px;color:#484848;">11.03</div>
<div class="t" style="right:413.2px;top:165.6px;font-size:17px;line-height:24px;color:#484848;">15.65</div>
<div class="t" style="right:331.9px;top:165.6px;font-size:17px;line-height:24px;color:#484848;">14.31</div>
<div class="t" style="right:250.6px;top:165.6px;font-size:17px;line-height:24px;color:#484848;">14.02</div>
<div class="t" style="right:169.3px;top:165.6px;font-size:17px;line-height:24px;color:#484848;">13.10</div>
<div class="t" style="right:88.0px;top:165.6px;font-size:17px;line-height:24px;color:#484848;">19.32</div>
<div class="t" style="right:6.7px;top:165.6px;font-size:17px;line-height:24px;color:#484848;">9.92</div>
<div class="b" style="left:0;top:189.6px;width:1111px;height:27.1px;background:#f5f5f5;"></div>
<div class="t" style="left:8px;top:191.8px;font-size:15px;line-height:24px;color:#333;"><span class="k">나미비아</span></div>
<div class="t" style="right:819.7px;top:192.7px;font-size:17px;line-height:24px;color:#484848;">22.77</div>
<div class="t" style="right:738.4px;top:192.7px;font-size:17px;line-height:24px;color:#484848;">17.68</div>
<div class="t" style="right:657.1px;top:192.7px;font-size:17px;line-height:24px;color:#484848;">17.48</div>
<div class="t" style="right:575.8px;top:192.7px;font-size:17px;line-height:24px;color:#484848;">8.34</div>
<div class="t" style="right:413.2px;top:192.7px;font-size:17px;line-height:24px;color:#484848;">11.39</div>
<div class="t" style="right:250.6px;top:192.7px;font-size:17px;line-height:24px;color:#484848;">7.34</div>
<div class="t" style="right:169.3px;top:192.7px;font-size:17px;line-height:24px;color:#484848;">9.91</div>
<div class="t" style="right:88.0px;top:192.7px;font-size:17px;line-height:24px;color:#484848;">36.81</div>
<div class="t" style="left:8px;top:218.8px;font-size:15px;line-height:24px;color:#333;"><span class="k">나이지리아</span></div>
<div class="t" style="right:738.4px;top:219.7px;font-size:17px;line-height:24px;color:#484848;">7.29</div>
<div class="t" style="right:657.1px;top:219.7px;font-size:17px;line-height:24px;color:#484848;">7.41</div>
<div class="t" style="right:494.5px;top:219.7px;font-size:17px;line-height:24px;color:#484848;">6.93</div>
<div class="t" style="right:413.2px;top:219.7px;font-size:17px;line-height:24px;color:#484848;">6.01</div>
<div class="t" style="right:331.9px;top:219.7px;font-size:17px;line-height:24px;color:#484848;">8.83</div>
<div class="t" style="right:250.6px;top:219.7px;font-size:17px;line-height:24px;color:#484848;">6.85</div>
<div class="t" style="right:169.3px;top:219.7px;font-size:17px;line-height:24px;color:#484848;">6.81</div>
<div class="t" style="right:88.0px;top:219.7px;font-size:17px;line-height:24px;color:#484848;">5.22</div>
<div class="t" style="right:6.7px;top:219.7px;font-size:17px;line-height:24px;color:#484848;">12.35</div>
<div class="b" style="left:0;top:243.7px;width:1111px;height:27.1px;background:#f5f5f5;"></div>
<div class="t" style="left:8px;top:245.9px;font-size:15px;line-height:24px;color:#333;"><span class="k">남아프리카</span></div>
<div class="t" style="right:901.0px;top:246.8px;font-size:17px;line-height:24px;color:#484848;">5.23</div>
<div class="t" style="right:819.7px;top:246.8px;font-size:17px;line-height:24px;color:#484848;">4.89</div>
<div class="t" style="right:738.4px;top:246.8px;font-size:17px;line-height:24px;color:#484848;">6.87</div>
<div class="t" style="right:657.1px;top:246.8px;font-size:17px;line-height:24px;color:#484848;">6.13</div>
<div class="t" style="right:575.8px;top:246.8px;font-size:17px;line-height:24px;color:#484848;">6.21</div>
<div class="t" style="right:494.5px;top:246.8px;font-size:17px;line-height:24px;color:#484848;">6.39</div>
<div class="t" style="right:413.2px;top:246.8px;font-size:17px;line-height:24px;color:#484848;">5.19</div>
<div class="t" style="right:331.9px;top:246.8px;font-size:17px;line-height:24px;color:#484848;">5.84</div>
<div class="t" style="right:250.6px;top:246.8px;font-size:17px;line-height:24px;color:#484848;">5.94</div>
<div class="t" style="right:169.3px;top:246.8px;font-size:17px;line-height:24px;color:#484848;">4.79</div>
<div class="t" style="right:88.0px;top:246.8px;font-size:17px;line-height:24px;color:#484848;">5.58</div>
<div class="t" style="right:6.7px;top:246.8px;font-size:17px;line-height:24px;color:#484848;">7.22</div>
<div class="t" style="left:8px;top:273.0px;font-size:15px;line-height:24px;color:#333;"><span class="k">네덜란드</span></div>
<div class="t" style="right:901.0px;top:273.9px;font-size:17px;line-height:24px;color:#484848;">3.89</div>
<div class="t" style="right:819.7px;top:273.9px;font-size:17px;line-height:24px;color:#484848;">4.73</div>
<div class="t" style="right:738.4px;top:273.9px;font-size:17px;line-height:24px;color:#484848;">3.96</div>
<div class="t" style="right:657.1px;top:273.9px;font-size:17px;line-height:24px;color:#484848;">3.76</div>
<div class="t" style="right:575.8px;top:273.9px;font-size:17px;line-height:24px;color:#484848;">3.98</div>
<div class="t" style="right:494.5px;top:273.9px;font-size:17px;line-height:24px;color:#484848;">3.44</div>
<div class="t" style="right:413.2px;top:273.9px;font-size:17px;line-height:24px;color:#484848;">3.82</div>
<div class="t" style="right:331.9px;top:273.9px;font-size:17px;line-height:24px;color:#484848;">3.61</div>
<div class="t" style="right:250.6px;top:273.9px;font-size:17px;line-height:24px;color:#484848;">4.20</div>
<div class="t" style="right:169.3px;top:273.9px;font-size:17px;line-height:24px;color:#484848;">3.39</div>
<div class="t" style="right:88.0px;top:273.9px;font-size:17px;line-height:24px;color:#484848;">3.53</div>
<div class="t" style="right:6.7px;top:273.9px;font-size:17px;line-height:24px;color:#484848;">4.49</div>
<div class="b" style="left:0;top:297.9px;width:1111px;height:27.1px;background:#f5f5f5;"></div>
<div class="t" style="left:8px;top:300.1px;font-size:15px;line-height:24px;color:#333;"><span class="k">네팔</span></div>
<div class="t" style="right:819.7px;top:301.0px;font-size:17px;line-height:24px;color:#484848;">6.89</div>
<div class="t" style="right:657.1px;top:301.0px;font-size:17px;line-height:24px;color:#484848;">6.91</div>
<div class="t" style="right:494.5px;top:301.0px;font-size:17px;line-height:24px;color:#484848;">5.88</div>
<div class="t" style="right:331.9px;top:301.0px;font-size:17px;line-height:24px;color:#484848;">7.13</div>
<div class="t" style="right:250.6px;top:301.0px;font-size:17px;line-height:24px;color:#484848;">6.03</div>
<div class="t" style="right:169.3px;top:301.0px;font-size:17px;line-height:24px;color:#484848;">8.05</div>
<div class="t" style="right:88.0px;top:301.0px;font-size:17px;line-height:24px;color:#484848;">12.36</div>
<div class="t" style="left:8px;top:327.2px;font-size:15px;line-height:24px;color:#333;"><span class="k">노르웨이</span></div>
<div class="t" style="right:901.0px;top:328.1px;font-size:17px;line-height:24px;color:#484848;">4.97</div>
<div class="t" style="right:819.7px;top:328.1px;font-size:17px;line-height:24px;color:#484848;">5.49</div>
<div class="t" style="right:738.4px;top:328.1px;font-size:17px;line-height:24px;color:#484848;">4.88</div>
<div class="t" style="right:657.1px;top:328.1px;font-size:17px;line-height:24px;color:#484848;">5.72</div>
<div class="t" style="right:575.8px;top:328.1px;font-size:17px;line-height:24px;color:#484848;">5.57</div>
<div class="t" style="right:494.5px;top:328.1px;font-size:17px;line-height:24px;color:#484848;">4.73</div>
<div class="t" style="right:413.2px;top:328.1px;font-size:17px;line-height:24px;color:#484848;">5.75</div>
<div class="t" style="right:331.9px;top:328.1px;font-size:17px;line-height:24px;color:#484848;">5.45</div>
<div class="t" style="right:250.6px;top:328.1px;font-size:17px;line-height:24px;color:#484848;">6.02</div>
<div class="t" style="right:169.3px;top:328.1px;font-size:17px;line-height:24px;color:#484848;">4.97</div>
<div class="t" style="right:88.0px;top:328.1px;font-size:17px;line-height:24px;color:#484848;">5.73</div>
<div class="t" style="right:6.7px;top:328.1px;font-size:17px;line-height:24px;color:#484848;">6.40</div>
<div class="b" style="left:0;top:352.0px;width:1111px;height:27.1px;background:#f5f5f5;"></div>
<div class="t" style="left:8px;top:354.2px;font-size:15px;line-height:24px;color:#333;"><span class="k">뉴 칼레도니아</span></div>
<div class="t" style="right:819.7px;top:355.1px;font-size:17px;line-height:24px;color:#484848;">11.13</div>
<div class="t" style="right:738.4px;top:355.1px;font-size:17px;line-height:24px;color:#484848;">15.38</div>
<div class="t" style="right:657.1px;top:355.1px;font-size:17px;line-height:24px;color:#484848;">12.32</div>
<div class="t" style="right:575.8px;top:355.1px;font-size:17px;line-height:24px;color:#484848;">12.34</div>
<div class="t" style="right:413.2px;top:355.1px;font-size:17px;line-height:24px;color:#484848;">18.84</div>
<div class="t" style="right:331.9px;top:355.1px;font-size:17px;line-height:24px;color:#484848;">20.46</div>
<div class="t" style="right:250.6px;top:355.1px;font-size:17px;line-height:24px;color:#484848;">13.42</div>
<div class="t" style="right:88.0px;top:355.1px;font-size:17px;line-height:24px;color:#484848;">14.38</div>
<div class="t" style="right:6.7px;top:355.1px;font-size:17px;line-height:24px;color:#484848;">19.37</div>
<div class="t" style="left:8px;top:381.3px;font-size:15px;line-height:24px;color:#333;"><span class="k">뉴질랜드</span></div>
<div class="t" style="right:901.0px;top:382.2px;font-size:17px;line-height:24px;color:#484848;">4.46</div>
<div class="t" style="right:819.7px;top:382.2px;font-size:17px;line-height:24px;color:#484848;">4.77</div>
<div class="t" style="right:738.4px;top:382.2px;font-size:17px;line-height:24px;color:#484848;">-0.40</div>
<div class="t" style="right:657.1px;top:382.2px;font-size:17px;line-height:24px;color:#484848;">8.95</div>
<div class="t" style="right:575.8px;top:382.2px;font-size:17px;line-height:24px;color:#484848;">9.40</div>
<div class="t" style="right:494.5px;top:382.2px;font-size:17px;line-height:24px;color:#484848;">7.96</div>
<div class="t" style="right:413.2px;top:382.2px;font-size:17px;line-height:24px;color:#484848;">7.49</div>
<div class="t" style="right:331.9px;top:382.2px;font-size:17px;line-height:24px;color:#484848;">6.69</div>
<div class="t" style="right:250.6px;top:382.2px;font-size:17px;line-height:24px;color:#484848;">5.63</div>
<div class="t" style="right:169.3px;top:382.2px;font-size:17px;line-height:24px;color:#484848;">6.30</div>
<div class="t" style="right:88.0px;top:382.2px;font-size:17px;line-height:24px;color:#484848;">6.96</div>
<div class="t" style="right:6.7px;top:382.2px;font-size:17px;line-height:24px;color:#484848;">7.91</div>
<div class="b" style="left:0;top:406.2px;width:1111px;height:27.1px;background:#f5f5f5;"></div>
<div class="t" style="left:8px;top:408.4px;font-size:15px;line-height:24px;color:#333;"><span class="k">니카라과</span></div>
<div class="t" style="right:819.7px;top:409.3px;font-size:17px;line-height:24px;color:#484848;">1.79</div>
<div class="t" style="right:738.4px;top:409.3px;font-size:17px;line-height:24px;color:#484848;">16.92</div>
<div class="t" style="right:657.1px;top:409.3px;font-size:17px;line-height:24px;color:#484848;">58.72</div>
<div class="t" style="right:575.8px;top:409.3px;font-size:17px;line-height:24px;color:#484848;">11.39</div>
<div class="t" style="right:494.5px;top:409.3px;font-size:17px;line-height:24px;color:#484848;">17.44</div>
<div class="t" style="right:413.2px;top:409.3px;font-size:17px;line-height:24px;color:#484848;">13.89</div>
<div class="t" style="right:331.9px;top:409.3px;font-size:17px;line-height:24px;color:#484848;">12.85</div>
<div class="t" style="right:250.6px;top:409.3px;font-size:17px;line-height:24px;color:#484848;">23.27</div>
<div class="t" style="right:169.3px;top:409.3px;font-size:17px;line-height:24px;color:#484848;">21.39</div>
<div class="t" style="right:6.7px;top:409.3px;font-size:17px;line-height:24px;color:#484848;">15.99</div>
<div class="t" style="left:8px;top:435.5px;font-size:15px;line-height:24px;color:#333;"><span class="k">대만</span></div>
<div class="t" style="right:901.0px;top:436.4px;font-size:17px;line-height:24px;color:#484848;">6.38</div>
<div class="t" style="right:819.7px;top:436.4px;font-size:17px;line-height:24px;color:#484848;">7.34</div>
<div class="t" style="right:738.4px;top:436.4px;font-size:17px;line-height:24px;color:#484848;">6.91</div>
<div class="t" style="right:657.1px;top:436.4px;font-size:17px;line-height:24px;color:#484848;">7.81</div>
<div class="t" style="right:575.8px;top:436.4px;font-size:17px;line-height:24px;color:#484848;">7.02</div>
<div class="t" style="right:494.5px;top:436.4px;font-size:17px;line-height:24px;color:#484848;">6.46</div>
<div class="t" style="right:413.2px;top:436.4px;font-size:17px;line-height:24px;color:#484848;">6.35</div>
<div class="t" style="right:331.9px;top:436.4px;font-size:17px;line-height:24px;color:#484848;">9.21</div>
<div class="t" style="right:250.6px;top:436.4px;font-size:17px;line-height:24px;color:#484848;">6.24</div>
<div class="t" style="right:169.3px;top:436.4px;font-size:17px;line-height:24px;color:#484848;">6.53</div>
<div class="t" style="right:88.0px;top:436.4px;font-size:17px;line-height:24px;color:#484848;">7.09</div>
<div class="t" style="right:6.7px;top:436.4px;font-size:17px;line-height:24px;color:#484848;">7.06</div>
<div class="b" style="left:0;top:460.4px;width:1111px;height:27.1px;background:#f5f5f5;"></div>
<div class="t" style="left:8px;top:462.6px;font-size:15px;line-height:24px;color:#333;"><span class="k">덴마크</span></div>
<div class="t" style="right:901.0px;top:463.5px;font-size:17px;line-height:24px;color:#484848;">3.05</div>
<div class="t" style="right:819.7px;top:463.5px;font-size:17px;line-height:24px;color:#484848;">4.35</div>
<div class="t" style="right:738.4px;top:463.5px;font-size:17px;line-height:24px;color:#484848;">4.99</div>
<div class="t" style="right:657.1px;top:463.5px;font-size:17px;line-height:24px;color:#484848;">3.70</div>
<div class="t" style="right:575.8px;top:463.5px;font-size:17px;line-height:24px;color:#484848;">4.31</div>
<div class="t" style="right:494.5px;top:463.5px;font-size:17px;line-height:24px;color:#484848;">1.07</div>
<div class="t" style="right:413.2px;top:463.5px;font-size:17px;line-height:24px;color:#484848;">4.49</div>
<div class="t" style="right:331.9px;top:463.5px;font-size:17px;line-height:24px;color:#484848;">4.81</div>
<div class="t" style="right:250.6px;top:463.5px;font-size:17px;line-height:24px;color:#484848;">4.30</div>
<div class="t" style="right:169.3px;top:463.5px;font-size:17px;line-height:24px;color:#484848;">3.94</div>
<div class="t" style="right:88.0px;top:463.5px;font-size:17px;line-height:24px;color:#484848;">4.23</div>
<div class="t" style="right:6.7px;top:463.5px;font-size:17px;line-height:24px;color:#484848;">4.69</div>
<div class="t" style="left:8px;top:489.6px;font-size:15px;line-height:24px;color:#333;"><span class="k">도미니카 공화국</span></div>
<div class="t" style="right:819.7px;top:490.5px;font-size:17px;line-height:24px;color:#484848;">2.27</div>
<div class="t" style="right:738.4px;top:490.5px;font-size:17px;line-height:24px;color:#484848;">9.82</div>
<div class="t" style="right:657.1px;top:490.5px;font-size:17px;line-height:24px;color:#484848;">3.39</div>
<div class="t" style="right:575.8px;top:490.5px;font-size:17px;line-height:24px;color:#484848;">9.89</div>
<div class="t" style="right:494.5px;top:490.5px;font-size:17px;line-height:24px;color:#484848;">6.34</div>
<div class="t" style="right:413.2px;top:490.5px;font-size:17px;line-height:24px;color:#484848;">2.92</div>
<div class="t" style="right:331.9px;top:490.5px;font-size:17px;line-height:24px;color:#484848;">6.12</div>
<div class="t" style="right:250.6px;top:490.5px;font-size:17px;line-height:24px;color:#484848;">7.01</div>
<div class="t" style="right:88.0px;top:490.5px;font-size:17px;line-height:24px;color:#484848;">5.91</div>
<div class="t" style="right:6.7px;top:490.5px;font-size:17px;line-height:24px;color:#484848;">1.81</div>
<div class="b" style="left:0;top:514.5px;width:1111px;height:27.1px;background:#f5f5f5;"></div>
<div class="t" style="left:8px;top:516.7px;font-size:15px;line-height:24px;color:#333;"><span class="k">독일</span></div>
<div class="t" style="right:901.0px;top:517.6px;font-size:17px;line-height:24px;color:#484848;">3.56</div>
<div class="t" style="right:819.7px;top:517.6px;font-size:17px;line-height:24px;color:#484848;">3.90</div>
<div class="t" style="right:738.4px;top:517.6px;font-size:17px;line-height:24px;color:#484848;">4.36</div>
<div class="t" style="right:657.1px;top:517.6px;font-size:17px;line-height:24px;color:#484848;">6.34</div>
<div class="t" style="right:575.8px;top:517.6px;font-size:17px;line-height:24px;color:#484848;">6.69</div>
<div class="t" style="right:494.5px;top:517.6px;font-size:17px;line-height:24px;color:#484848;">8.20</div>
<div class="t" style="right:413.2px;top:517.6px;font-size:17px;line-height:24px;color:#484848;">7.82</div>
<div class="t" style="right:331.9px;top:517.6px;font-size:17px;line-height:24px;color:#484848;">7.88</div>
<div class="t" style="right:250.6px;top:517.6px;font-size:17px;line-height:24px;color:#484848;">6.58</div>
<div class="t" style="right:169.3px;top:517.6px;font-size:17px;line-height:24px;color:#484848;">5.90</div>
<div class="t" style="right:88.0px;top:517.6px;font-size:17px;line-height:24px;color:#484848;">6.70</div>
<div class="t" style="right:6.7px;top:517.6px;font-size:17px;line-height:24px;color:#484848;">8.85</div>
<div class="t" style="left:8px;top:543.8px;font-size:15px;line-height:24px;color:#333;"><span class="k">라오스</span></div>
<div class="t" style="right:901.0px;top:544.7px;font-size:17px;line-height:24px;color:#484848;">5.33</div>
<div class="t" style="right:575.8px;top:544.7px;font-size:17px;line-height:24px;color:#484848;">5.02</div>
<div class="t" style="right:88.0px;top:544.7px;font-size:17px;line-height:24px;color:#484848;">1.87</div>
<div class="b" style="left:0;top:568.7px;width:1111px;height:27.1px;background:#f5f5f5;"></div>
<div class="t" style="left:8px;top:570.9px;font-size:15px;line-height:24px;color:#333;"><span class="k">라트비아</span></div>
<div class="t" style="right:901.0px;top:571.8px;font-size:17px;line-height:24px;color:#484848;">5.57</div>
<div class="t" style="right:819.7px;top:571.8px;font-size:17px;line-height:24px;color:#484848;">5.34</div>
<div class="t" style="right:738.4px;top:571.8px;font-size:17px;line-height:24px;color:#484848;">6.25</div>
<div class="t" style="right:657.1px;top:571.8px;font-size:17px;line-height:24px;color:#484848;">6.23</div>
<div class="t" style="right:575.8px;top:571.8px;font-size:17px;line-height:24px;color:#484848;">5.33</div>
<div class="t" style="right:494.5px;top:571.8px;font-size:17px;line-height:24px;color:#484848;">7.58</div>
<div class="t" style="right:413.2px;top:571.8px;font-size:17px;line-height:24px;color:#484848;">5.73</div>
<div class="t" style="right:331.9px;top:571.8px;font-size:17px;line-height:24px;color:#484848;">6.38</div>
<div class="t" style="right:250.6px;top:571.8px;font-size:17px;line-height:24px;color:#484848;">5.60</div>
<div class="t" style="right:169.3px;top:571.8px;font-size:17px;line-height:24px;color:#484848;">5.01</div>
<div class="t" style="right:88.0px;top:571.8px;font-size:17px;line-height:24px;color:#484848;">5.56</div>
<div class="t" style="right:6.7px;top:571.8px;font-size:17px;line-height:24px;color:#484848;">5.60</div>
<div class="t" style="left:8px;top:598.0px;font-size:15px;line-height:24px;color:#333;"><span class="k">루마니아</span></div>
<div class="t" style="right:901.0px;top:598.9px;font-size:17px;line-height:24px;color:#484848;">6.72</div>
<div class="t" style="right:819.7px;top:598.9px;font-size:17px;line-height:24px;color:#484848;">5.69</div>
<div class="t" style="right:738.4px;top:598.9px;font-size:17px;line-height:24px;color:#484848;">6.82</div>
<div class="t" style="right:657.1px;top:598.9px;font-size:17px;line-height:24px;color:#484848;">6.51</div>
<div class="t" style="right:575.8px;top:598.9px;font-size:17px;line-height:24px;color:#484848;">5.65</div>
<div class="t" style="right:494.5px;top:598.9px;font-size:17px;line-height:24px;color:#484848;">6.46</div>
<div class="t" style="right:413.2px;top:598.9px;font-size:17px;line-height:24px;color:#484848;">5.65</div>
<div class="t" style="right:331.9px;top:598.9px;font-size:17px;line-height:24px;color:#484848;">7.52</div>
<div class="t" style="right:250.6px;top:598.9px;font-size:17px;line-height:24px;color:#484848;">5.65</div>
<div class="t" style="right:169.3px;top:598.9px;font-size:17px;line-height:24px;color:#484848;">6.27</div>
<div class="t" style="right:88.0px;top:598.9px;font-size:17px;line-height:24px;color:#484848;">6.40</div>
<div class="t" style="right:6.7px;top:598.9px;font-size:17px;line-height:24px;color:#484848;">9.33</div>
<div class="b" style="left:0;top:622.8px;width:1111px;height:27.1px;background:#f5f5f5;"></div>
<div class="t" style="left:8px;top:625.0px;font-size:15px;line-height:24px;color:#333;"><span class="k">룩셈부르크</span></div>
<div class="t" style="right:901.0px;top:625.9px;font-size:17px;line-height:24px;color:#484848;">3.16</div>
<div class="t" style="right:819.7px;top:625.9px;font-size:17px;line-height:24px;color:#484848;">3.28</div>
<div class="t" style="right:738.4px;top:625.9px;font-size:17px;line-height:24px;color:#484848;">4.42</div>
<div class="t" style="right:657.1px;top:625.9px;font-size:17px;line-height:24px;color:#484848;">3.58</div>
<div class="t" style="right:575.8px;top:625.9px;font-size:17px;line-height:24px;color:#484848;">3.58</div>
<div class="t" style="right:494.5px;top:625.9px;font-size:17px;line-height:24px;color:#484848;">3.43</div>
<div class="t" style="right:413.2px;top:625.9px;font-size:17px;line-height:24px;color:#484848;">4.23</div>
<div class="t" style="right:331.9px;top:625.9px;font-size:17px;line-height:24px;color:#484848;">3.08</div>
<div class="t" style="right:250.6px;top:625.9px;font-size:17px;line-height:24px;color:#484848;">3.61</div>
<div class="t" style="right:169.3px;top:625.9px;font-size:17px;line-height:24px;color:#484848;">2.81</div>
<div class="t" style="right:88.0px;top:625.9px;font-size:17px;line-height:24px;color:#484848;">3.20</div>
<div class="t" style="right:6.7px;top:625.9px;font-size:17px;line-height:24px;color:#484848;">4.12</div>
<div class="t" style="left:8px;top:652.1px;font-size:15px;line-height:24px;color:#333;"><span class="k">르완다</span></div>
<div class="t" style="right:413.2px;top:653.0px;font-size:17px;line-height:24px;color:#484848;">4.76</div>
<div class="t" style="right:6.7px;top:653.0px;font-size:17px;line-height:24px;color:#484848;">13.97</div>
<div class="b" style="left:0;top:677.0px;width:1111px;height:27.1px;background:#f5f5f5;"></div>
<div class="t" style="left:8px;top:679.2px;font-size:15px;line-height:24px;color:#333;"><span class="k">리유니언</span></div>
<div class="t" style="right:901.0px;top:680.1px;font-size:17px;line-height:24px;color:#484848;">6.37</div>
<div class="t" style="right:819.7px;top:680.1px;font-size:17px;line-height:24px;color:#484848;">7.69</div>
<div class="t" style="right:738.4px;top:680.1px;font-size:17px;line-height:24px;color:#484848;">8.30</div>
<div class="t" style="right:657.1px;top:680.1px;font-size:17px;line-height:24px;color:#484848;">9.05</div>
<div class="t" style="right:575.8px;top:680.1px;font-size:17px;line-height:24px;color:#484848;">12.38</div>
<div class="t" style="right:494.5px;top:680.1px;font-size:17px;line-height:24px;color:#484848;">9.61</div>
<div class="t" style="right:413.2px;top:680.1px;font-size:17px;line-height:24px;color:#484848;">9.68</div>
<div class="t" style="right:331.9px;top:680.1px;font-size:17px;line-height:24px;color:#484848;">9.36</div>
<div class="t" style="right:250.6px;top:680.1px;font-size:17px;line-height:24px;color:#484848;">8.25</div>
<div class="t" style="right:169.3px;top:680.1px;font-size:17px;line-height:24px;color:#484848;">11.83</div>
<div class="t" style="right:88.0px;top:680.1px;font-size:17px;line-height:24px;color:#484848;">9.57</div>
<div class="t" style="right:6.7px;top:680.1px;font-size:17px;line-height:24px;color:#484848;">11.89</div>
</div>
<div class="b" style="left:534px;top:1035px;width:134px;height:1px;background:#c8c8c8;box-sizing:border-box;"></div>
<div class="b" style="left:1645px;top:347px;width:12px;height:689px;background:#f5f5f5;box-sizing:border-box;"></div>
<div class="b" style="left:1646px;top:347px;width:11px;height:118px;background:#dedede;box-sizing:border-box;"></div>
<div class="b" style="left:1821px;top:229px;width:219px;height:73px;background:#ffffff;box-sizing:border-box;border:1px solid #d9d9d9;"></div>
<div class="t" style="top:235.0px;font-size:15px;line-height:24px;color:#333;font-weight:normal;left:1830px;"><span class="k">고객사명</span>2</div>
<div class="b" style="left:1830px;top:264px;width:200px;height:27px;background:#fff;box-sizing:border-box;border:1px solid #8a8a8a;"></div>
<div class="t" style="top:266.0px;font-size:16px;line-height:24px;color:#333;font-weight:normal;left:1836px;">weverse</div>
<svg class="b" style="left:2013px;top:275px;" width="8" height="6" viewBox="0 0 8 6"><path d="M0 0H8L4 6Z" fill="#222"/></svg>
<div class="b" style="left:0px;top:1051px;width:2048px;height:41px;background:#e6e6e6;box-sizing:border-box;"></div>
<div class="b" style="left:0px;top:1051px;width:2048px;height:1px;background:#d0d0d0;box-sizing:border-box;"></div>
<div class="b" style="left:0px;top:1092px;width:2048px;height:21px;background:#efefef;box-sizing:border-box;"></div>
<div class="b" style="left:0px;top:1092px;width:2048px;height:1px;background:#d6d6d6;box-sizing:border-box;"></div>
<div class="b" style="left:151px;top:1052px;width:76px;height:40px;background:#f8f8f8;box-sizing:border-box;"></div>
<div class="b" style="left:150px;top:1052px;width:1px;height:40px;background:#d0d0d0;box-sizing:border-box;"></div>
<div class="b" style="left:227px;top:1052px;width:1px;height:40px;background:#d0d0d0;box-sizing:border-box;"></div>
<div class="b" style="left:271px;top:1052px;width:1px;height:40px;background:#d0d0d0;box-sizing:border-box;"></div>
<div class="b" style="left:314px;top:1052px;width:1px;height:40px;background:#d0d0d0;box-sizing:border-box;"></div>
<div class="b" style="left:357px;top:1052px;width:1px;height:40px;background:#d0d0d0;box-sizing:border-box;"></div>
<svg class="b" style="left:14px;top:1061px;" width="13" height="17" viewBox="0 0 13 17"><ellipse cx="6.5" cy="3.5" rx="5.3" ry="2.5" fill="none" stroke="#666" stroke-width="1.3"/><path d="M1.2 3.5V13.5C1.2 15 3.5 16 6.5 16C9.5 16 11.8 15 11.8 13.5V3.5" fill="none" stroke="#666" stroke-width="1.3"/></svg>
<div class="t" style="top:1058.0px;font-size:14px;line-height:24px;color:#555;font-weight:normal;left:34px;"><span class="k">데이터 원본</span></div>
<div class="t" style="top:1058.0px;font-size:16px;line-height:24px;color:#222;font-weight:bold;left:161px;">Sheet 1</div>
<svg class="b" style="left:240px;top:1060px;" width="23" height="22" viewBox="0 0 23 22"><path d="M15 12V2H2V15H11" fill="none" stroke="#666" stroke-width="1.4"/><path d="M6 12V9M9 12V6M12 12V8" stroke="#666" stroke-width="1.2"/><path d="M17 11V21M12 16H22" stroke="#666" stroke-width="2.4"/></svg>
<svg class="b" style="left:283px;top:1060px;" width="23" height="22" viewBox="0 0 23 22"><rect x="1.5" y="1.5" width="14" height="13" rx="1" fill="none" stroke="#666" stroke-width="1.4"/><path d="M8.5 1.5V14.5M1.5 8H15.5" stroke="#666" stroke-width="1.4"/><path d="M17 11V21M12 16H22" stroke="#666" stroke-width="2.4"/></svg>
<svg class="b" style="left:326px;top:1060px;" width="23" height="22" viewBox="0 0 23 22"><path d="M2 2L8 4.5L14 2V12M8 4.5V16L2 13.5V2" fill="none" stroke="#666" stroke-width="1.4"/><path d="M17 11V21M12 16H22" stroke="#666" stroke-width="2.4"/></svg>
<div class="t" style="top:1094.5px;font-size:12.7px;line-height:20px;color:#444;font-weight:normal;left:13px;">1429<span class="k">개 마크</span></div>
<div class="t" style="top:1094.5px;font-size:12.7px;line-height:20px;color:#444;font-weight:normal;left:97px;">147<span class="k">행</span> x 12<span class="k">열</span></div>
<div class="t" style="top:1094.5px;font-size:13.3px;line-height:20px;color:#444;font-weight:normal;left:185px;"><span class="k">평균</span>(leadtime)<span class="k">의 합계</span>: 9,862.39</div>
<svg class="b" style="left:0;top:1093px" width="2048" height="20"><path d="M0 6A26.5 26.5 0 0 0 4.3 20H0Z" fill="#7a7a7a"/><path d="M2048 6A26.5 26.5 0 0 1 2043.7 20H2048Z" fill="#7a7a7a"/></svg>
</body></html>
